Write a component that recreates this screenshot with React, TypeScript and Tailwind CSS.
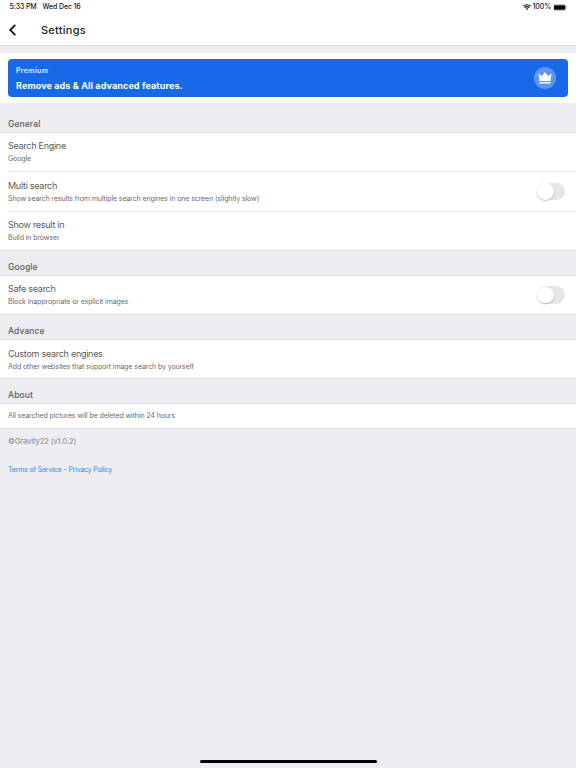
import React from "react";

function SectionTitle({ title, className = "h-[25px]" }: { title: string; className?: string }) {
  return (
    <div className={`flex items-end border-b border-[#e3e3e6] px-2 pb-[2px] ${className}`}>
      <h2 className="text-[8.5px] leading-[12px] font-medium tracking-[0.1px] text-[#5c5c60]">{title}</h2>
    </div>
  );
}

function Toggle() {
  return (
    <div className="flex h-[17.5px] w-[28.5px] items-center rounded-full bg-[#e6e6e7] pl-[0.5px]">
      <div className="size-[16.5px] rounded-full bg-white shadow-[0_1px_2px_rgba(0,0,0,0.22)]" />
    </div>
  );
}

function Row({ title, detail, toggle, divider }: { title: string; detail: string; toggle?: boolean; divider?: boolean }) {
  return (
    <div className="ml-2 flex flex-col">
      <div className="flex h-[38.3px] items-center justify-between pr-[11px]">
        <div className="pt-[0.6px]">
          <div className="text-[9px] leading-[13px] tracking-[-0.27px] text-[#59595b]">{title}</div>
          <div className="text-[7px] leading-[13px] tracking-[-0.105px] text-[#6a6a6c]">{detail}</div>
        </div>
        {toggle && <Toggle />}
      </div>
      {divider && <div className="h-px bg-[#e9e9ea]" />}
    </div>
  );
}

export default function App() {
  return (
    <div className="flex h-[768px] w-[576px] flex-col overflow-hidden bg-[#eeedf2] font-['Inter','Liberation_Sans',sans-serif] antialiased">
      <header className="h-[46px] shrink-0 border-b border-[#dfdfe2] bg-white">
        <div className="flex h-[14px] items-center justify-between pr-[9px] pl-[9.5px] text-[7px] font-medium text-[#161616]">
          <div className="flex gap-[6px] tracking-[-0.13px]">
            <span>5:33 PM</span>
            <span>Wed Dec 16</span>
          </div>
          <div className="flex items-center">
            <svg width="8" height="6.5" viewBox="0 0 16 13" className="mr-[2px]" fill="none" stroke="#111" strokeWidth="2.3">
              <path d="M1 4.5C5 .5 11 .5 15 4.5M3.5 7.6c2.6-2.5 6.4-2.5 9 0" />
              <path d="M5.5 9.6c1.4-1.4 3.6-1.4 5 0L8 12.3Z" fill="#111" stroke="none" />
            </svg>
            <span className="tracking-[-0.1px]">100%</span>
            <svg width="14.5" height="7" viewBox="0 0 29 14" className="ml-[1.5px]">
              <rect x=".5" y="1" width="25.5" height="12" rx="3.5" fill="none" stroke="#999" />
              <rect x="2" y="2.5" width="22.5" height="9" rx="2" fill="#000" />
              <path d="M27 5v4c1.5-.5 1.5-3.5 0-4" fill="#999" />
            </svg>
          </div>
        </div>
        <div className="flex h-[31px] items-center pl-2">
          <svg width="9" height="12" viewBox="0 0 9 12" fill="none" stroke="#111" strokeWidth="1.8">
            <path d="M7.3.8 2.2 6l5.1 5.2" />
          </svg>
          <h1 className="ml-6 pt-px text-[11px] font-medium tracking-[0.25px] text-[#252525]">Settings</h1>
        </div>
      </header>

      <section className="mt-[7px] h-[49.5px] shrink-0 bg-white px-2 pt-[6px]">
        <div className="flex h-[38px] items-center justify-between rounded-[4px] bg-[#1769e7] pr-[12px] pl-2 text-white">
          <div>
            <div className="text-[7px] leading-[12px] font-semibold tracking-[0.33px] text-[#e6effc]">Premium</div>
            <div className="mt-[2px] text-[9px] leading-[13px] font-bold tracking-[0.11px]">Remove ads &amp; All advanced features.</div>
          </div>
          <div className="flex size-[22.5px] items-center justify-center rounded-full bg-[#5d96ee]">
            <svg width="14" height="12" viewBox="0 0 14 12" fill="#fff">
              <path d="M.4 1.4 3.9 3.9 7 0l3.1 3.9 3.5-2.5-1.2 7.5H1.6ZM1.6 9.9h10.8v1.7H1.6Z" />
            </svg>
          </div>
        </div>
      </section>

      <main>
        <SectionTitle title="General" className="h-[30.5px]" />
        <div className="border-b border-[#e3e3e6] bg-white">
          <Row title="Search Engine" detail="Google" divider />
          <Row title="Multi search" detail="Show search results from multiple search engines in one screen (slightly slow)" toggle divider />
          <Row title="Show result in" detail="Build in browser" />
        </div>
        <SectionTitle title="Google" />
        <div className="border-b border-[#e3e3e6] bg-white">
          <Row title="Safe search" detail="Block inappropriate or explicit images" toggle />
        </div>
        <SectionTitle title="Advance" />
        <div className="border-b border-[#e3e3e6] bg-white">
          <Row title="Custom search engines" detail="Add other websites that support image search by yourself" />
        </div>
        <SectionTitle title="About" />
        <div className="flex h-[25px] items-center border-b border-[#e3e3e6] bg-white px-2 text-[7px] tracking-[-0.105px] text-[#6a6a6c]">
          All searched pictures will be deleted within 24 hours
        </div>
      </main>

      <footer className="px-2 pt-[6px]">
        <div className="text-[7.5px] leading-[13px] tracking-[-0.07px] text-[#858589]">©Gravity22 (v1.0.2)</div>
        <div className="mt-[15px] flex gap-[2px] text-[7px] leading-[13px] tracking-[-0.19px] text-[#1f8be6]">
          <a>Terms of Service</a>
          <span className="text-[#777]">-</span>
          <a>Privacy Policy</a>
        </div>
      </footer>

      <div className="mx-auto mt-auto mb-[5px] h-[3px] w-[177px] shrink-0 rounded-full bg-black" />
    </div>
  );
}
